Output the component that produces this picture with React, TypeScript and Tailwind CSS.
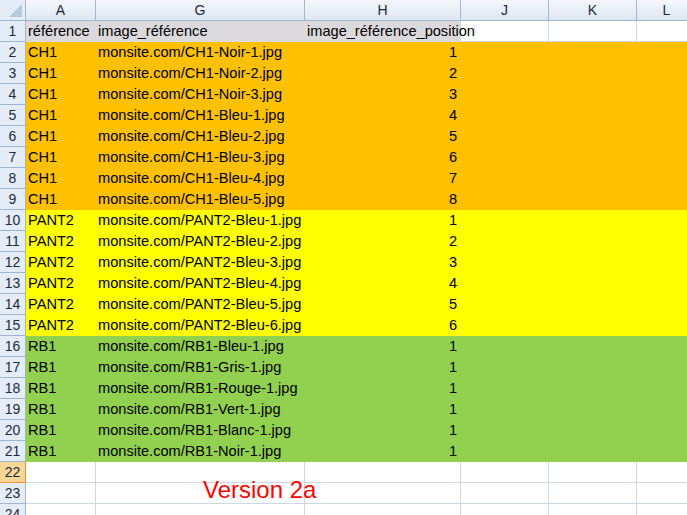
const cols = ['A', 'G', 'H', 'J', 'K', 'L'];

type Row = { ref: string; img: string; pos: string; bg: string };

const groups: { ref: string; bg: string; names: string[]; pos: number[] }[] = [
  {
    ref: 'CH1',
    bg: 'bg-[#ffc000]',
    names: ['Noir-1', 'Noir-2', 'Noir-3', 'Bleu-1', 'Bleu-2', 'Bleu-3', 'Bleu-4', 'Bleu-5'],
    pos: [1, 2, 3, 4, 5, 6, 7, 8],
  },
  {
    ref: 'PANT2',
    bg: 'bg-[#ffff00]',
    names: ['Bleu-1', 'Bleu-2', 'Bleu-3', 'Bleu-4', 'Bleu-5', 'Bleu-6'],
    pos: [1, 2, 3, 4, 5, 6],
  },
  {
    ref: 'RB1',
    bg: 'bg-[#92d050]',
    names: ['Bleu-1', 'Gris-1', 'Rouge-1', 'Vert-1', 'Blanc-1', 'Noir-1'],
    pos: [1, 1, 1, 1, 1, 1],
  },
];

const rows: Row[] = groups.flatMap((g) =>
  g.names.map((n, i) => ({
    ref: g.ref,
    img: `monsite.com/${g.ref}-${n}.jpg`,
    pos: String(g.pos[i]),
    bg: g.bg,
  }))
);

const RowHead = ({ n, active }: { n: number; active?: boolean }) => (
  <div
    className={
      active
        ? 'flex items-center justify-center border-r border-b border-[#f29436] bg-[#f8d796] text-[14px] text-[#1e2b3c]'
        : 'flex items-center justify-center border-r border-b border-[#9eb6ce] bg-[#e4ecf7] text-[14px] text-[#1e2b3c]'
    }
  >
    {n}
  </div>
);

const Blank = () => <div className="border-r border-b border-[#d0d7e5] bg-white" />;

export default function App() {
  return (
    <div
      className="h-[515px] w-[687px] overflow-hidden bg-white text-[14.6px] text-black"
      style={{ fontFamily: '"Liberation Sans", Arial, sans-serif' }}
    >
      <div className="grid grid-cols-[26px_70px_209px_156px_88px_88px_60px] auto-rows-[21px]">
        {/* en-têtes de colonnes */}
        <div className="relative border-r border-b border-[#9eb6ce] bg-[#e4ecf7]">
          <div className="absolute right-[3px] bottom-[3px] h-0 w-0 border-l-[13px] border-t-[13px] border-l-transparent border-t-transparent border-b-0 border-r-0 [border-bottom:13px_solid_#b8c9dc]" />
        </div>
        {cols.map((c) => (
          <div
            key={c}
            className="flex items-center justify-center border-r border-b border-[#9eb6ce] bg-gradient-to-b from-[#f4f7fc] to-[#dde6f2] text-[14px] text-[#1e2b3c]"
          >
            {c}
          </div>
        ))}

        {/* ligne 1 */}
        <RowHead n={1} />
        <div className="flex items-center whitespace-nowrap bg-[#dcd9dc] pl-[2px]">référence</div>
        <div className="flex items-center bg-[#dcd9dc] pl-[2px]">image_référence</div>
        <div className="relative z-10 flex items-center whitespace-nowrap bg-[#dcd9dc] pl-[2px]">
          image_référence_position
        </div>
        <div className="border-r border-b border-[#d0d7e5] bg-white" />
        <Blank />
        <Blank />

        {rows.map((r, i) => (
          <div key={i} className="contents">
            <RowHead n={i + 2} />
            <div className={`flex items-center pl-[2px] ${r.bg}`}>{r.ref}</div>
            <div className={`flex items-center whitespace-nowrap pl-[2px] ${r.bg}`}>{r.img}</div>
            <div className={`flex items-center justify-end pr-[4px] ${r.bg}`}>{r.pos}</div>
            <div className={r.bg} />
            <div className={r.bg} />
            <div className={r.bg} />
          </div>
        ))}

        {/* lignes 22 à 24 */}
        {[22, 23, 24].map((n) => (
          <div key={n} className="contents">
            <RowHead n={n} active={n === 22} />
            <Blank />
            <div className="relative border-r border-b border-[#d0d7e5] bg-white">
              {n === 23 && (
                <span className="absolute left-[107px] top-[-11px] whitespace-nowrap text-[24px] text-[#ff0000]">
                  Version 2a
                </span>
              )}
            </div>
            <Blank />
            <Blank />
            <Blank />
            <Blank />
          </div>
        ))}
      </div>
    </div>
  );
}
